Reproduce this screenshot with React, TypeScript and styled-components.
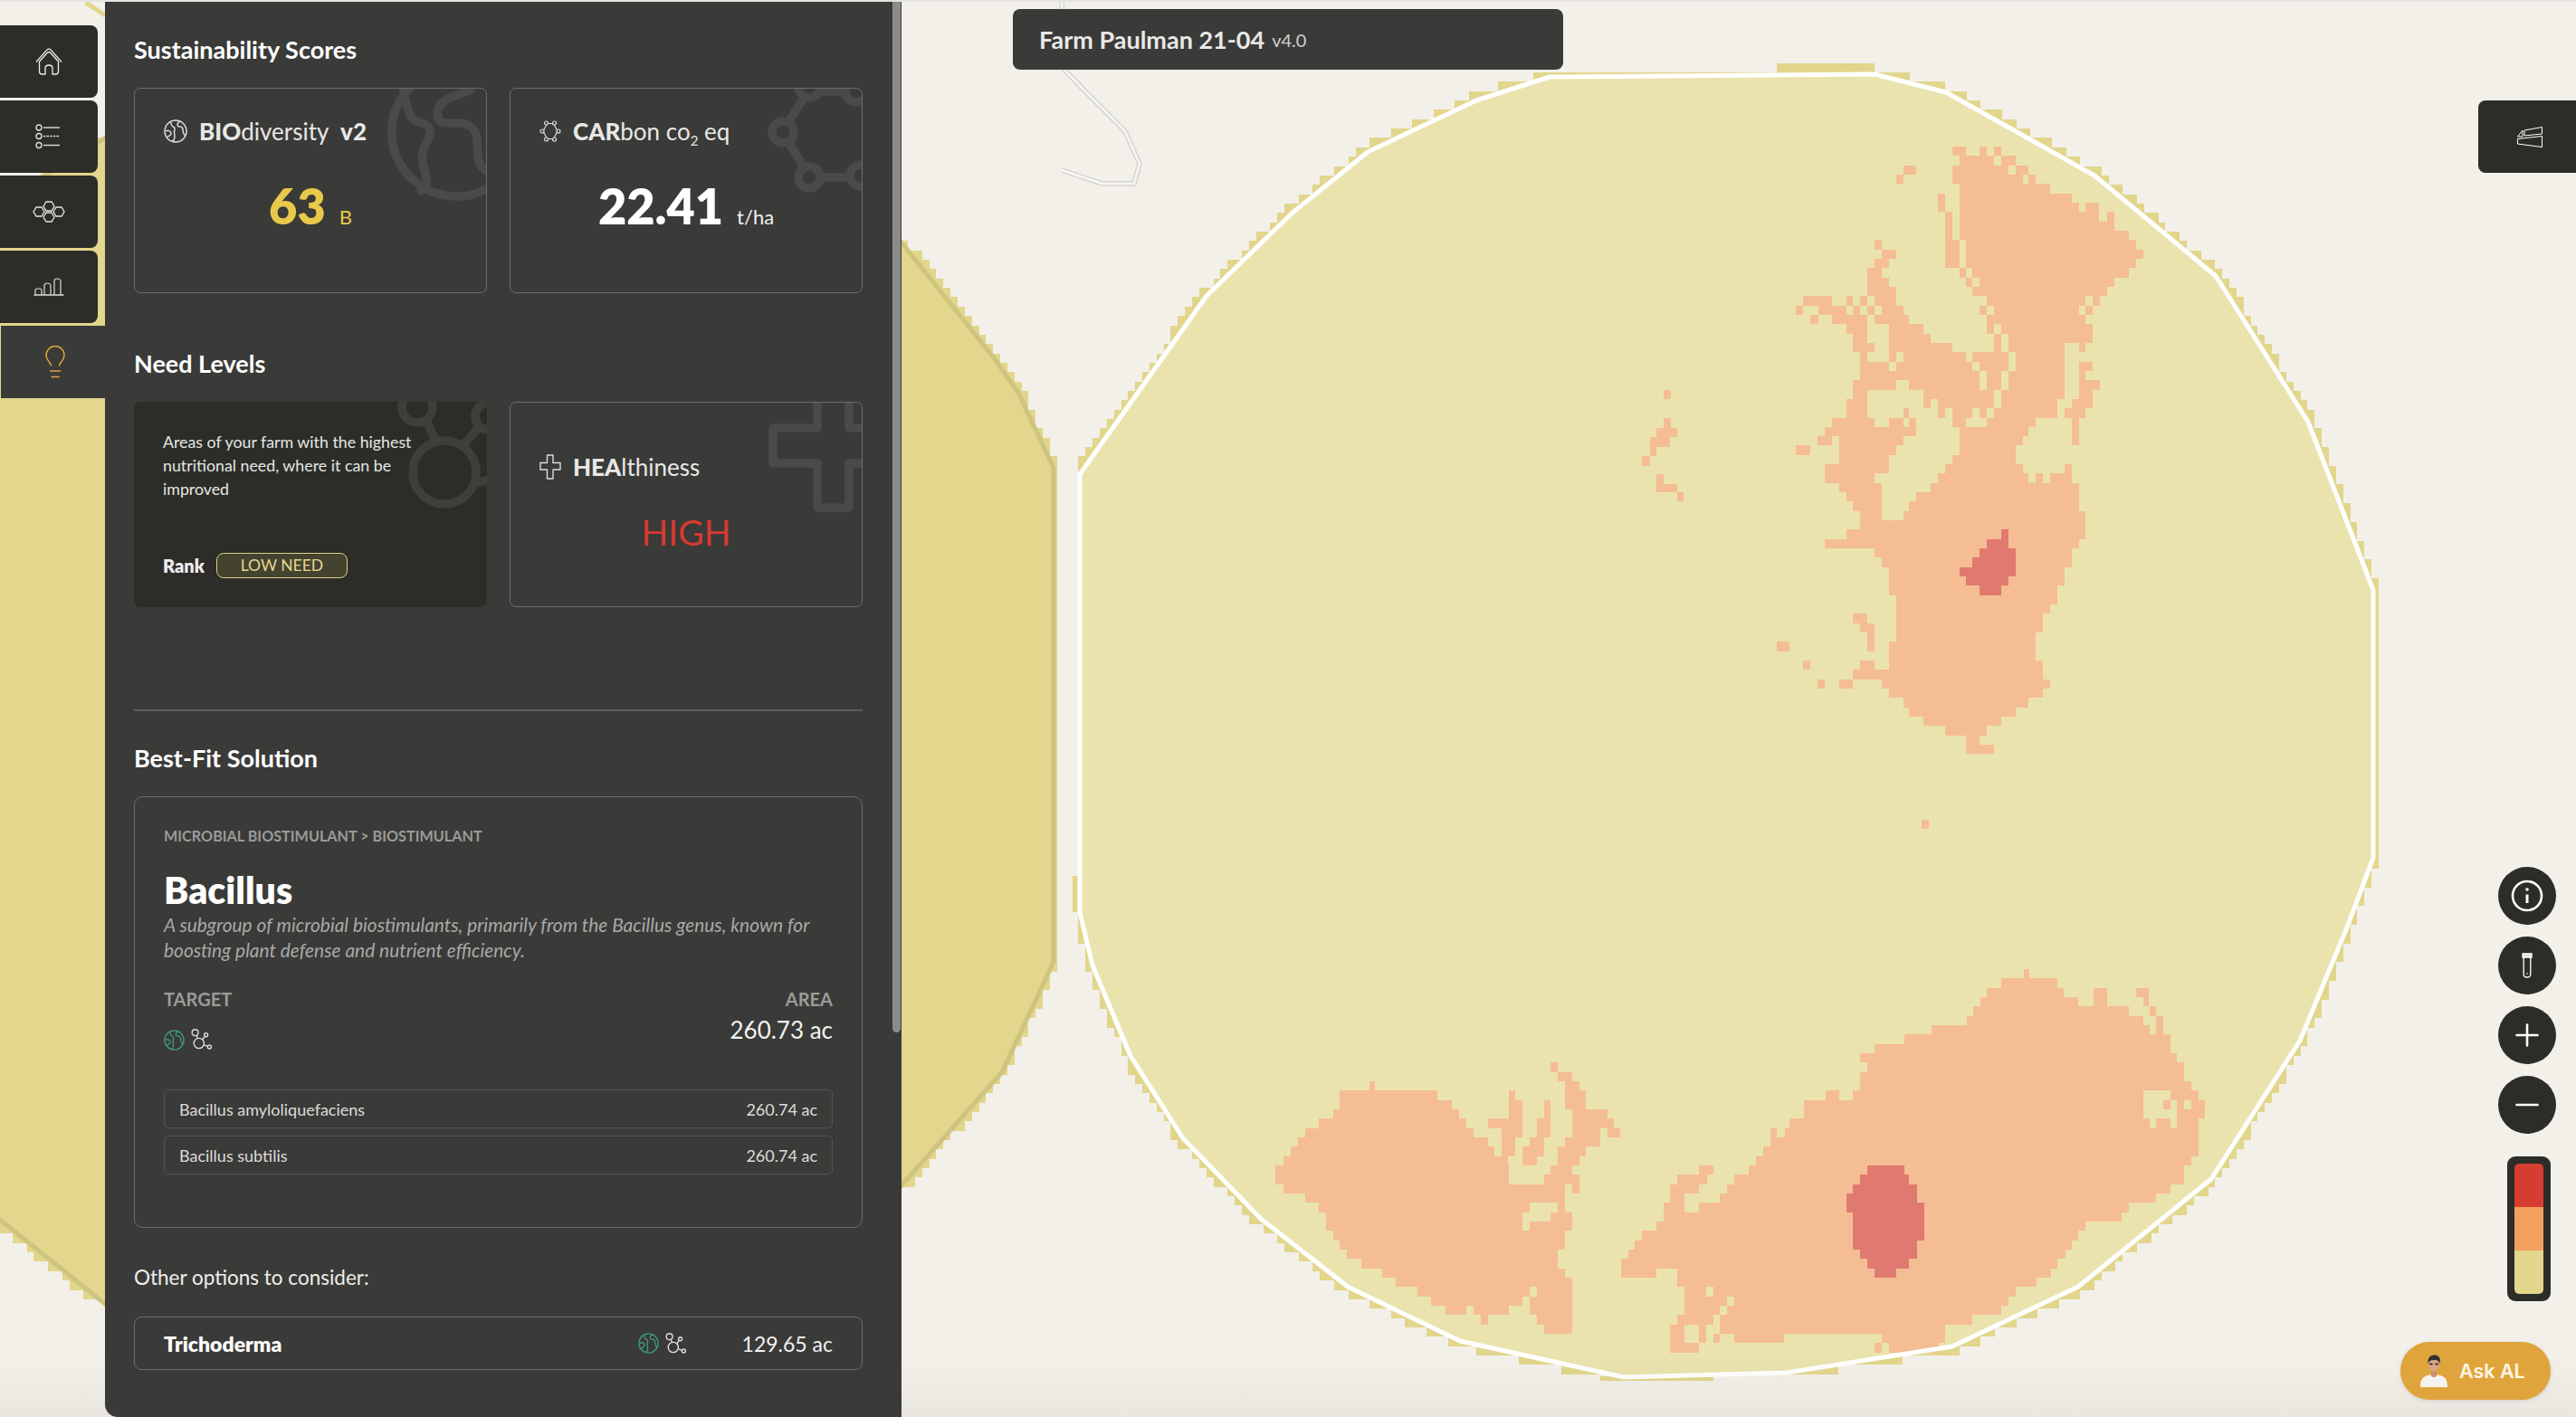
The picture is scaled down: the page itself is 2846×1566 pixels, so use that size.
import React from "react";
import styled, { createGlobalStyle } from "styled-components";

const GlobalStyle = createGlobalStyle`
  html, body {
    margin: 0;
    padding: 0;
    background: #f2f0e9;
  }
  body {
    font-family: "Lato", "Open Sans", sans-serif;
    color: #fff;
  }
  * {
    box-sizing: border-box;
  }
`;

// ---- map data, traced from the field raster ----

const FARM: number[][] = [
  [1193, 524], [1333, 327], [1428, 235], [1511, 168], [1631, 111], [1712, 85],
  [2071, 82], [2150, 102], [2314, 194], [2448, 305], [2550, 466], [2622, 652],
  [2622, 948], [2593, 1025], [2541, 1150], [2443, 1303], [2296, 1422], [2157, 1488],
  [1974, 1517], [1794, 1522], [1613, 1482], [1489, 1422], [1393, 1347], [1307, 1258],
  [1249, 1167], [1207, 1067], [1193, 1008],
];

const NEIGHBOUR: number[][] = [
  [-10, 232], [120, 150], [900, 150], [996, 268], [1100, 398], [1125, 434], [1164, 517],
  [1164, 1063], [1107, 1185], [996, 1310], [900, 1441], [116, 1441], [-10, 1340],
];

// x pairs per row, in units of the upper patch tile
const UPPER_PATCH: number[][] = [
  [770, 816, 862, 885, 908, 933],
  [795, 908, 933, 981],
  [610, 652, 770, 957, 981, 1023],
  [585, 610, 770, 1005, 1023, 1047],
  [795, 1095],
  [723, 747, 795, 1168],
  [723, 747, 795, 1190, 1212, 1258],
  [747, 772, 795, 1258, 1283, 1307],
  [747, 772, 795, 1307],
  [747, 772, 795, 1355],
  [513, 537, 747, 795, 816, 1380],
  [537, 585, 747, 795, 816, 1403],
  [513, 560, 747, 795, 816, 1380],
  [490, 537, 795, 816, 838, 1355],
  [490, 560, 816, 838, 862, 1307],
  [490, 585, 838, 1283],
  [277, 373, 421, 441, 465, 490, 513, 585, 885, 1212, 1236, 1260],
  [253, 277, 327, 421, 441, 465, 490, 513, 537, 610, 862, 885, 908, 1190, 1212, 1236],
  [301, 327, 373, 490, 513, 628, 885, 1212],
  [421, 490, 560, 675, 885, 908, 933, 1236],
  [441, 490, 560, 700, 908, 933, 957, 1236],
  [441, 513, 560, 772, 908, 933, 957, 1143, 1190, 1212],
  [465, 490, 560, 585, 610, 816, 838, 957, 981, 1143],
  [465, 560, 585, 838, 862, 957, 981, 1143, 1190, 1236],
  [465, 862, 885, 933, 957, 1143, 1190, 1212],
  [441, 585, 628, 862, 885, 933, 957, 1143, 1190, 1260],
  [441, 490, 675, 908, 933, 1143, 1190, 1236],
  [421, 490, 675, 700, 723, 908, 933, 1120, 1168, 1236],
  [421, 490, 610, 628, 723, 747, 772, 838, 862, 885, 908, 1120, 1143, 1212],
  [373, 513, 560, 610, 628, 652, 772, 816, 885, 1047, 1168, 1190],
  [349, 652, 795, 1023, 1168, 1190],
  [325, 373, 397, 610, 795, 1005, 1168, 1190],
  [253, 301, 397, 585, 795, 981],
  [397, 560, 772, 981],
  [349, 560, 747, 1005, 1143, 1168],
  [349, 513, 723, 1023, 1047, 1072, 1095, 1168],
  [397, 537, 700, 1190],
  [421, 537, 652, 1190],
  [441, 537, 628, 1190],
  [465, 537, 610, 1212],
  [465, 1212],
  [421, 1212],
  [349, 1190],
  [513, 1168],
  [537, 1168],
  [560, 1143],
  [560, 1143],
  [560, 1120],
  [585, 1120],
  [585, 1095],
  [441, 490, 585, 1072],
  [465, 513, 585, 1072],
  [490, 513, 585, 1047],
  [190, 230, 490, 513, 560, 1047],
  [560, 1047],
  [277, 301, 465, 513, 560, 1072],
  [441, 1072],
  [325, 349, 397, 441, 537, 1095],
  [560, 1072],
  [610, 1023],
  [628, 981],
  [675, 933],
  [747, 885],
  [816, 862],
  [816, 908],
];

const UPPER_CORE: number[][] = [
  [933, 957], [885, 957], [860, 981], [838, 981], [795, 981], [816, 957], [860, 933],
];

const LOWER_PATCH: number[][] = [
  [1207, 1216],
  [1174, 1258],
  [1152, 1268, 1312, 1333, 1377, 1396],
  [1142, 1290, 1312, 1333, 1387, 1396],
  [1131, 1365, 1397, 1407],
  [1121, 1387, 1407, 1417],
  [1069, 1397, 1407, 1417],
  [1027, 1428],
  [983, 1428],
  [961, 1438],
  [495, 505, 972, 1449],
  [505, 527, 961, 1449],
  [222, 230, 516, 538, 961, 1460],
  [177, 325, 432, 442, 516, 548, 909, 930, 950, 1387, 1428, 1470],
  [177, 346, 432, 453, 485, 495, 516, 548, 877, 1387, 1417, 1428, 1438, 1449, 1460, 1480],
  [167, 357, 432, 453, 485, 495, 527, 580, 877, 1387, 1438, 1480],
  [146, 368, 401, 453, 474, 495, 527, 590, 855, 1397, 1407, 1428, 1438, 1470],
  [125, 379, 421, 453, 474, 495, 527, 570, 580, 600, 826, 836, 848, 1470],
  [115, 400, 421, 442, 464, 485, 516, 570, 826, 1470],
  [104, 410, 421, 442, 453, 485, 506, 548, 815, 1470],
  [92, 430, 453, 474, 506, 538, 804, 1460],
  [81, 432, 495, 527, 718, 740, 793, 1449],
  [81, 432, 485, 538, 686, 730, 771, 1449],
  [92, 516, 527, 538, 675, 718, 761, 1428],
  [125, 516, 675, 696, 750, 1407],
  [146, 464, 506, 516, 665, 696, 718, 1365],
  [156, 453, 495, 527, 665, 1355],
  [156, 453, 464, 527, 654, 1300],
  [167, 516, 633, 1290],
  [177, 516, 622, 1280],
  [188, 506, 612, 1270],
  [210, 506, 601, 1258],
  [241, 516, 601, 654, 686, 1248],
  [262, 527, 686, 1226],
  [294, 464, 474, 527, 697, 729, 740, 1195],
  [315, 453, 464, 527, 697, 761, 771, 1185],
  [336, 368, 379, 432, 464, 527, 697, 750, 761, 1174],
  [390, 400, 474, 527, 686, 740, 750, 1130],
  [485, 527, 675, 696, 718, 729, 750, 1089],
  [675, 696, 718, 729, 740, 750, 771, 847, 994, 1089],
  [675, 718, 983, 994, 1005, 1079],
];

const LOWER_CORE: [number, number[]][] = [
  [21, [972, 1027]], [22, [961, 1035]], [23, [950, 1047]], [24, [940, 1047]], [25, [940, 1058]],
  [26, [950, 1058]], [27, [950, 1058]], [28, [950, 1058]], [29, [950, 1047]], [30, [961, 1047]],
  [31, [972, 1035]], [32, [983, 1016]],
];

const STRAY_CELLS = [
  [1838, 431, 8, 10], [1838, 462, 8, 11], [1830, 473, 23, 10], [1823, 483, 22, 11], [1823, 494, 7, 10],
  [1814, 504, 9, 11], [1830, 524, 8, 11], [1830, 535, 23, 9], [1853, 544, 7, 10], [2123, 906, 8, 10],
];

const upperRow = (spans: number[], i: number) => {
  const y1 = 100 + (128 + i * 21.3) / 2.063;
  const y2 = y1 + 21.3 / 2.063;
  return toRects(spans, (v) => 1900 + v / 3, y1, y2);
};

const lowerRow = (spans: number[], i: number) => {
  const y1 = 1060 + (33 + i * 31) / 3;
  const y2 = y1 + 31 / 3;
  return toRects(spans, (v) => 1350 + v / 1.363, y1, y2);
};

function toRects(spans: number[], mapX: (v: number) => number, y1: number, y2: number) {
  let d = "";
  for (let k = 0; k < spans.length; k += 2) {
    const a = mapX(spans[k]).toFixed(1);
    const b = mapX(spans[k + 1]).toFixed(1);
    d += `M${a} ${y1.toFixed(1)}H${b}V${y2.toFixed(1)}H${a}Z`;
  }
  return d;
}

function scan(poly: number[][], y: number) {
  const xs: number[] = [];
  poly.forEach(([x1, y1], i) => {
    const [x2, y2] = poly[(i + 1) % poly.length];
    if ((y1 <= y && y2 > y) || (y2 <= y && y1 > y)) {
      xs.push(x1 + ((y - y1) / (y2 - y1)) * (x2 - x1));
    }
  });
  return xs.length ? [Math.min(...xs), Math.max(...xs)] : null;
}

// the coarse raster pokes out past the smooth boundary in stair steps
const CELL_W = 7.85;
const CELL_H = 10.35;
const GRID_X = 6;

function stairs(poly: number[][], padLeft: number, padRight: number) {
  let d = "";
  for (let y = 80; y < 1530; y += CELL_H) {
    const hit = scan(poly, y + CELL_H / 2);
    if (!hit) continue;
    const top = scan(poly, y) || hit;
    const bottom = scan(poly, y + CELL_H) || hit;
    const lo = Math.min(hit[0], top[0], bottom[0]);
    const hi = Math.max(hit[1], top[1], bottom[1]);
    const a = Math.floor((lo - padLeft - GRID_X) / CELL_W) * CELL_W + GRID_X;
    const b = Math.ceil((hi + padRight - GRID_X) / CELL_W) * CELL_W + GRID_X;
    d += `M${a.toFixed(1)} ${y.toFixed(1)}H${b.toFixed(1)}V${(y + CELL_H).toFixed(1)}H${a.toFixed(1)}Z`;
  }
  return d;
}

const points = (poly: number[][]) => poly.map((p) => p.join(",")).join(" ");

const upperPatchPath = UPPER_PATCH.map(upperRow).join("");
const upperCorePath = UPPER_CORE.map((s, i) => upperRow(s, i + 41)).join("");
const lowerPatchPath = LOWER_PATCH.map(lowerRow).join("");
const lowerCorePath = LOWER_CORE.map(([i, s]) => lowerRow(s, i)).join("");
const strayPath = STRAY_CELLS.map(([x, y, w, h]) => `M${x} ${y}h${w}v${h}h${-w}Z`).join("");

const ROAD = "M1173 0 L1176 77 L1199 101 L1243 145 L1259 181 L1253 203 L1218 203 L1173 188";

const FieldMap: React.FC = () => (
  <MapSvg viewBox="0 0 2846 1566" width={2846} height={1566}>
    <path d={ROAD} fill="none" stroke="#cfcfcc" strokeWidth={5.5} />
    <path d={ROAD} fill="none" stroke="#f6f5f2" strokeWidth={3} />
    <path d="M95 3 L116 17" stroke="#e2d68c" strokeWidth={5} />

    <path d={stairs(NEIGHBOUR, 2, 0)} fill="#e2d68c" shapeRendering="crispEdges" />
    <polygon points={points(NEIGHBOUR)} fill="#e3d68d" stroke="#cfc47e" strokeWidth={5} />

    <path d={stairs(FARM, 1.5, 2)} fill="#e2d68c" shapeRendering="crispEdges" />
    <path d="M1963 70H2071V82H1963ZM1768 1521H1893V1526H1768ZM1185 968H1191V1008H1185Z" fill="#e2d68c" shapeRendering="crispEdges" />
    <polygon points={points(FARM)} fill="#ebe3ae" />

    <path d={upperPatchPath + lowerPatchPath + strayPath} fill="#f5bd94" shapeRendering="crispEdges" />
    <path d={upperCorePath + lowerCorePath} fill="#e07a70" shapeRendering="crispEdges" />

    <polygon points={points(FARM)} fill="none" stroke="#fff" strokeWidth={5} strokeLinejoin="round" />
  </MapSvg>
);

// ---- icons ----

const HomeIcon = () => (
  <svg width={30} height={30} viewBox="0 0 30 30" fill="none" stroke="#eee" strokeWidth={1.3} strokeLinejoin="round">
    <path d="M1 15.5 L12.6 2.4 Q15 0 17.4 2.4 L29 15.5" />
    <path d="M4.5 15 L13 5.5 Q15 3.6 17 5.5 L25.5 15" />
    <path d="M4.5 15 V26 Q4.5 29 7.5 29 H11 V22.5 Q11 19 15 19 Q19 19 19 22.5 V29 H22.5 Q25.5 29 25.5 26 V15" />
  </svg>
);

const ListIcon = () => (
  <svg width={30} height={28} viewBox="0 0 30 28" fill="none" stroke="#ddd" strokeWidth={1.4}>
    <circle cx={4} cy={4} r={3} />
    <circle cx={4} cy={13.5} r={3} />
    <circle cx={4} cy={23.5} r={3} />
    <path d="M9 4 H27" />
    <path d="M9 13.5 H27" strokeDasharray="2.4 1.2" />
    <path d="M9 23.5 H27" />
  </svg>
);

const hex = (cx: number, cy: number) =>
  [[-6, 0], [-3, -5], [3, -5], [6, 0], [3, 5], [-3, 5]].map(([x, y]) => `${cx + x},${cy + y}`).join(" ");

const HexIcon = () => (
  <svg width={36} height={26} viewBox="0 0 36 26" fill="none" stroke="#e4e4e2" strokeWidth={1.3}>
    <polygon points={hex(7, 13)} />
    <polygon points={hex(18, 7)} />
    <polygon points={hex(18, 19)} />
    <polygon points={hex(29, 13)} />
  </svg>
);

const BarsIcon = () => (
  <svg width={34} height={20} viewBox="0 0 34 20" fill="none" stroke="#ddd" strokeWidth={1.2}>
    <path d="M0.5 19 H33.5" strokeWidth={1.6} />
    <path d="M2 19 V14 Q2 12 4 12 H7 Q9 12 9 14 V19" />
    <path d="M12 19 V9 Q12 6 15 6 Q19 6 19 9 V19" />
    <path d="M23 19 V4 Q23 1 26 1 Q30 1 30 4 V19" />
  </svg>
);

const BulbIcon = () => (
  <svg width={24} height={36} viewBox="0 0 24 36" fill="none" stroke="#dfa53c" strokeWidth={1.5} strokeLinecap="round">
    <path d="M7.5 22 C7 18.5 2 16.5 2 10.5 A10 10 0 0 1 22 10.5 C22 16.5 17 18.5 16.5 22" />
    <path d="M6.5 28 H17.5" />
    <path d="M8 34.5 H16" />
  </svg>
);

const GlobeIcon: React.FC<{ color?: string; size?: number }> = ({ color = "#ddd", size = 26 }) => (
  <svg width={size} height={size} viewBox="0 0 26 26" fill="none" stroke={color} strokeWidth={1.5} strokeLinejoin="round">
    <circle cx={13} cy={13} r={12} />
    <path d="M7.5 2.5 C8 6 9.5 8 11 8.5 C13 9 11.5 12 11.5 14 C11.5 17 13 20 11 23 L9 24" />
    <path d="M18.5 2 C15 3 14.5 5.5 15.5 7.5 C18 8 21 7.5 21 11 C21 14 21.5 17 24.5 18" />
    <path d="M2 13 C5 11 8 13 8 16 C8 18 5 18 4 19.5" />
  </svg>
);

const MoleculeRing = () => (
  <svg width={24} height={24} viewBox="0 0 24 24" fill="none" stroke="#ddd" strokeWidth={1.2}>
    <path d="M8.5 3.5 H15.5 L20 12 L15.5 20.5 H8.5 L4 12 Z" />
    {[[7.5, 3], [16.5, 3], [21, 12], [16.5, 21], [7.5, 21], [3, 12]].map(([cx, cy]) => (
      <circle key={`${cx}-${cy}`} cx={cx} cy={cy} r={2} fill="#3a3a38" />
    ))}
  </svg>
);

const CrossIcon = () => (
  <svg width={24} height={28} viewBox="0 0 24 28" fill="none" stroke="#ddd" strokeWidth={1.4} strokeLinejoin="round">
    <path d="M8.5 1 H15 V9.5 H23 V17 H15 V27 H8.5 V17 H1 V9.5 H8.5 Z" />
  </svg>
);

const NutrientIcon = () => (
  <svg width={24} height={24} viewBox="0 0 24 24" fill="none" stroke="#ddd" strokeWidth={1.4}>
    <circle cx={4.6} cy={4.2} r={3.4} />
    <circle cx={16.6} cy={6.8} r={2} />
    <circle cx={8.8} cy={16} r={5.6} />
    <circle cx={20.4} cy={20} r={2} />
    <path d="M6 7.5 L7.6 10.5 M15.4 8.4 L12.6 12 M14.2 17.6 L18.4 19.4" />
  </svg>
);

const SliceIcon = () => (
  <svg width={28} height={23} viewBox="0 0 28 23" fill="none" stroke="#fff" strokeWidth={1} strokeLinejoin="round">
    <path d="M0.5 13.5 L27.5 10.5 V22.5 L0.5 19 Z" />
    <path d="M8 4 L27.5 0.5 V8 L8 10 Z" />
    <path d="M0.5 11 L6 4 V11 Z" />
  </svg>
);

const InfoIcon = () => (
  <svg width={36} height={36} viewBox="0 0 36 36" fill="none" stroke="#fff" strokeWidth={2.6}>
    <circle cx={18} cy={18} r={16} />
    <path d="M18 16.5 V26" strokeWidth={3} />
    <circle cx={18} cy={11} r={1.8} fill="#fff" stroke="none" />
  </svg>
);

const TubeIcon = () => (
  <svg width={12} height={28} viewBox="0 0 12 28" fill="none" stroke="#fff" strokeWidth={1.3}>
    <path d="M1 1 H11 V5 H1 Z" fill="#ddd" />
    <path d="M2.2 5 V24 Q2.2 27 6 27 Q9.8 27 9.8 24 V5" />
    <circle cx={6} cy={23} r={0.8} fill="#fff" stroke="none" />
  </svg>
);

const PlusIcon = () => (
  <svg width={26} height={26} viewBox="0 0 26 26" stroke="#fff" strokeWidth={2.6} strokeLinecap="round">
    <path d="M1.5 13 H24.5 M13 1.5 V24.5" />
  </svg>
);

const MinusIcon = () => (
  <svg width={26} height={26} viewBox="0 0 26 26" stroke="#fff" strokeWidth={2.6} strokeLinecap="round">
    <path d="M1.5 13 H24.5" />
  </svg>
);

const AlAvatar = () => (
  <svg width={30} height={36} viewBox="0 0 30 36">
    <path d="M0 36 C0 27 3 24 10 22.5 L20 22.5 C27 24 30 27 30 36 Z" fill="#f4f3f0" />
    <path d="M12 17 H18 V24 Q15 26 12 24 Z" fill="#c99474" />
    <ellipse cx={15} cy={11} rx={6} ry={7.6} fill="#d8a585" />
    <path d="M8.6 10 C7.5 3 12 0 16.5 0.5 C21 1 23 5 21.4 10 C20.5 6.5 18 6 15 6 C11.5 6 9.5 7 8.6 10 Z" fill="#34322f" />
    <path d="M10 10.6 H13.6 M16.4 10.6 H20" stroke="#2a2522" strokeWidth={1.5} />
  </svg>
);

const GlobeWatermark = () => (
  <Watermark viewBox="0 0 130 130" width={130} height={130} $color="#4a4a48">
    <circle cx={97} cy={48} r={71} />
    <path d="M38 -2 C42 15 44 32 52 36 C66 38 72 44 66 56 C58 70 58 78 62 90 C65 100 66 108 58 113" />
    <path d="M112 2 C96 8 76 12 76 28 C77 38 82 38 94 38 C110 37 118 42 120 55 C121 68 118 85 132 92" />
  </Watermark>
);

const CarbonWatermark = () => (
  <Watermark viewBox="0 0 130 130" width={130} height={130} $color="#4a4a48">
    <circle cx={43} cy={48} r={12} />
    <circle cx={72} cy={98} r={12} />
    <circle cx={129} cy={96} r={12} />
    <circle cx={72} cy={-2} r={12} />
    <circle cx={124} cy={3} r={12} />
    <path d="M49 37 L67 9 M49 59 L66 87 M84 98 H117 M84 3 H112" />
  </Watermark>
);

const NeedWatermark = () => (
  <Watermark viewBox="0 0 130 130" width={130} height={130} $color="#3e3f3b">
    <circle cx={83} cy={78} r={35} />
    <circle cx={53} cy={6} r={17} />
    <circle cx={132} cy={16} r={15} />
    <path d="M63 21 L74 44 M104 48 L122 27 M116 90 L134 86" />
  </Watermark>
);

const CrossWatermark = () => (
  <Watermark viewBox="0 0 130 130" width={130} height={130} $color="#4a4a48">
    <path d="M81 -8 V28 H32 V67 H81 V116 H116 V67 H140 M116 -8 V28 H140" strokeLinejoin="round" />
  </Watermark>
);

// ---- page ----

const navIcons = [<HomeIcon key="home" />, <ListIcon key="list" />, <HexIcon key="hex" />, <BarsIcon key="bars" />];

const App: React.FC = () => {
  return (
    <Page>
      <GlobalStyle />
      <FieldMap />
      <BottomShade />
      <Shell>
        <Nav>
          {navIcons.map((icon, i) => (
            <NavButton key={i}>{icon}</NavButton>
          ))}
          <NavActive>
            <BulbIcon />
          </NavActive>
        </Nav>

        <Panel>
          <Scrollbar />
          <SectionTitle>Sustainability Scores</SectionTitle>
          <CardGrid>
            <OutlineCard>
              <GlobeWatermark />
              <CardTitle>
                <GlobeIcon />
                <span>
                  <b>BIO</b>diversity&nbsp; <b>v2</b>
                </span>
              </CardTitle>
              <Score>
                <ScoreValue $color="#e8c94a">63</ScoreValue>
                <ScoreUnit $color="#e8c94a">B</ScoreUnit>
              </Score>
            </OutlineCard>
            <OutlineCard>
              <CarbonWatermark />
              <CardTitle>
                <MoleculeRing />
                <span>
                  <b>CAR</b>bon co<sub>2</sub> eq
                </span>
              </CardTitle>
              <Score>
                <ScoreValue>22.41</ScoreValue>
                <ScoreUnit>t/ha</ScoreUnit>
              </Score>
            </OutlineCard>
          </CardGrid>

          <NeedTitle>Need Levels</NeedTitle>
          <CardGrid>
            <NeedCard>
              <NeedWatermark />
              <NeedText>
                Areas of your farm with the highest
                <br />
                nutritional need, where it can be
                <br />
                improved
              </NeedText>
              <RankRow>
                <RankLabel>Rank</RankLabel>
                <RankPill>LOW NEED</RankPill>
              </RankRow>
            </NeedCard>
            <HealthCard>
              <CrossWatermark />
              <CardTitle>
                <CrossIcon />
                <span>
                  <b>HEA</b>lthiness
                </span>
              </CardTitle>
              <HealthValue>HIGH</HealthValue>
            </HealthCard>
          </CardGrid>

          <Divider />
          <BestFitTitle>Best-Fit Solution</BestFitTitle>
          <SolutionCard>
            <Breadcrumb>MICROBIAL BIOSTIMULANT &gt; BIOSTIMULANT</Breadcrumb>
            <SolutionName>Bacillus</SolutionName>
            <SolutionText>
              A subgroup of microbial biostimulants, primarily from the Bacillus genus, known for
              <br />
              boosting plant defense and nutrient efficiency.
            </SolutionText>
            <MetaRow>
              <div>
                <MetaLabel>TARGET</MetaLabel>
                <TargetIcons>
                  <GlobeIcon color="#3f9b7d" size={23} />
                  <NutrientIcon />
                </TargetIcons>
              </div>
              <AreaCol>
                <MetaLabel>AREA</MetaLabel>
                <AreaValue>260.73 ac</AreaValue>
              </AreaCol>
            </MetaRow>
            <StrainList>
              <StrainRow>
                <span>Bacillus amyloliquefaciens</span>
                <span>260.74 ac</span>
              </StrainRow>
              <StrainRow>
                <span>Bacillus subtilis</span>
                <span>260.74 ac</span>
              </StrainRow>
            </StrainList>
          </SolutionCard>

          <OtherTitle>Other options to consider:</OtherTitle>
          <OptionRow>
            <OptionName>Trichoderma</OptionName>
            <OptionIcons>
              <GlobeIcon color="#3f9b7d" size={23} />
              <NutrientIcon />
            </OptionIcons>
            <OptionArea>129.65 ac</OptionArea>
          </OptionRow>
        </Panel>
      </Shell>

      <FarmBar>
        Farm Paulman 21-04 <FarmVersion>v4.0</FarmVersion>
      </FarmBar>

      <LayerTab>
        <SliceIcon />
      </LayerTab>

      <MapControls>
        <RoundButton>
          <InfoIcon />
        </RoundButton>
        <RoundButton>
          <TubeIcon />
        </RoundButton>
        <RoundButton>
          <PlusIcon />
        </RoundButton>
        <RoundButton>
          <MinusIcon />
        </RoundButton>
        <Legend>
          <LegendInner>
            <LegendStep $color="#d63c30" />
            <LegendStep $color="#f2a05e" />
            <LegendStep $color="#e2d68c" />
          </LegendInner>
        </Legend>
      </MapControls>

      <AskButton>
        <AlAvatar />
        Ask AL
      </AskButton>
    </Page>
  );
};

const Page = styled.div`
  position: relative;
  width: 2846px;
  height: 1566px;
  overflow: hidden;
  background: #f2f0e9;
  border-top: 2px solid #e3e4e0;
`;

const MapSvg = styled.svg`
  position: absolute;
  left: 0;
  top: -2px;
`;

const BottomShade = styled.div`
  position: absolute;
  left: 0;
  right: 0;
  bottom: 0;
  height: 70px;
  background: linear-gradient(to bottom, rgba(0, 0, 0, 0), rgba(60, 50, 30, 0.05));
`;

const Shell = styled.div`
  position: relative;
  display: flex;
  align-items: stretch;
  height: 1564px;
`;

const Nav = styled.nav`
  width: 116px;
  padding-top: 26px;
  display: flex;
  flex-direction: column;
  gap: 3px;
`;

const NavButton = styled.button`
  width: 108px;
  height: 80px;
  border: 0;
  padding: 0 0 0 0;
  background: #2c2d28;
  border-radius: 0 8px 8px 0;
  display: flex;
  align-items: center;
  justify-content: center;
`;

const NavActive = styled(NavButton)`
  width: 115px;
  margin-left: 1px;
  padding-left: 4px;
  background: #3a3a38;
  border-radius: 0;
`;

const Panel = styled.aside`
  position: relative;
  width: 880px;
  padding: 37px 43px 0 32px;
  background: #3a3a38;
  border-radius: 0 0 0 14px;
`;

const Scrollbar = styled.div`
  position: absolute;
  right: 1px;
  top: 0;
  width: 9px;
  height: 1139px;
  background: #8c8c8a;
  border-radius: 0 0 5px 5px;
`;

const SectionTitle = styled.h2`
  margin: 0 0 26px;
  font-size: 27px;
  line-height: 32px;
  font-weight: 700;
  color: #fff;
`;

const NeedTitle = styled(SectionTitle)`
  margin-top: 62px;
`;

const BestFitTitle = styled(SectionTitle)`
  margin-top: 36px;
`;

const CardGrid = styled.div`
  display: grid;
  grid-template-columns: 390px 390px;
  gap: 25px;
`;

const BaseCard = styled.div`
  position: relative;
  height: 227px;
  overflow: hidden;
  border-radius: 7px;
`;

const OutlineCard = styled(BaseCard)`
  border: 1.5px solid #6c6c6a;
  padding: 31px 32px 0 32px;
`;

const NeedCard = styled(BaseCard)`
  display: flex;
  flex-direction: column;
  background: #2c2d28;
  padding: 31px 20px 32px 32px;
`;

const HealthCard = styled(OutlineCard)`
  padding-top: 55px;
`;

const Watermark = styled.svg<{ $color: string }>`
  position: absolute;
  right: 0;
  top: 0;
  fill: none;
  stroke: ${(p) => p.$color};
  stroke-width: 9.5;
  stroke-linecap: round;
`;

const CardTitle = styled.div`
  position: relative;
  display: flex;
  align-items: center;
  gap: 13px;
  height: 32px;
  font-size: 26px;
  white-space: nowrap;
  color: #e8e8e6;

  b {
    font-weight: 900;
  }
  sub {
    font-size: 15px;
    line-height: 0;
    vertical-align: -6px;
  }
`;

const Score = styled.div`
  position: relative;
  margin-top: 37px;
  height: 60px;
  display: flex;
  align-items: baseline;
  justify-content: center;
  gap: 15px;
`;

const ScoreValue = styled.span<{ $color?: string }>`
  font-size: 54px;
  line-height: 60px;
  font-weight: 800;
  color: ${(p) => p.$color || "#fff"};
`;

const ScoreUnit = styled.span<{ $color?: string }>`
  font-size: 22px;
  color: ${(p) => p.$color || "#f2f2f2"};
`;

const NeedText = styled.div`
  position: relative;
  font-size: 17.8px;
  line-height: 26px;
  color: #e6e6e4;
`;

const RankRow = styled.div`
  position: relative;
  margin-top: auto;
  display: flex;
  align-items: center;
  gap: 13px;
`;

const RankLabel = styled.span`
  font-size: 20px;
  font-weight: 800;
  color: #eee;
`;

const RankPill = styled.span`
  width: 145px;
  height: 28px;
  border: 1.5px solid #d9d08a;
  border-radius: 8px;
  background: #44432f;
  color: #e3d68f;
  font-size: 17.5px;
  line-height: 25px;
  text-align: center;
`;

const HealthValue = styled.div`
  position: relative;
  margin-top: 31px;
  text-align: center;
  font-size: 39px;
  line-height: 50px;
  color: #d63a30;
`;

const Divider = styled.hr`
  margin: 113px 0 0;
  border: 0;
  height: 2px;
  background: #5f5f5d;
`;

const SolutionCard = styled.div`
  height: 477px;
  border: 1.5px solid #6c6c6a;
  border-radius: 10px;
  padding: 33px 32px 0;
`;

const Breadcrumb = styled.div`
  font-size: 16.2px;
  line-height: 20px;
  font-weight: 700;
  color: #9b9b99;
`;

const SolutionName = styled.div`
  margin-top: 28px;
  font-size: 41px;
  line-height: 44px;
  font-weight: 800;
  color: #fff;
`;

const SolutionText = styled.div`
  margin-top: 2px;
  font-size: 20.9px;
  line-height: 28px;
  font-style: italic;
  white-space: nowrap;
  color: #a9a9a7;
`;

const MetaRow = styled.div`
  margin-top: 28px;
  display: flex;
  justify-content: space-between;
`;

const MetaLabel = styled.div`
  font-size: 20px;
  line-height: 24px;
  font-weight: 700;
  color: #9b9b99;
`;

const TargetIcons = styled.div`
  margin-top: 21px;
  display: flex;
  align-items: center;
  gap: 7px;
`;

const AreaCol = styled.div`
  text-align: right;
`;

const AreaValue = styled.div`
  margin-top: 7px;
  font-size: 26px;
  line-height: 30px;
  color: #f2f2f2;
`;

const StrainList = styled.div`
  margin-top: 43px;
  display: flex;
  flex-direction: column;
  gap: 8px;
`;

const StrainRow = styled.div`
  height: 43px;
  padding: 0 16px;
  border: 1px solid #545452;
  border-radius: 5px;
  display: flex;
  align-items: center;
  justify-content: space-between;
  font-size: 18px;
  color: #dcdcda;
`;

const OtherTitle = styled.div`
  margin: 40px 0 28px;
  font-size: 22.5px;
  line-height: 30px;
  color: #eeeeec;
`;

const OptionRow = styled.div`
  height: 59px;
  padding: 0 32px;
  border: 1.5px solid #6c6c6a;
  border-radius: 8px;
  display: flex;
  align-items: center;
`;

const OptionName = styled.div`
  flex: 1;
  font-size: 23px;
  font-weight: 800;
  color: #fff;
`;

const OptionIcons = styled(TargetIcons)`
  margin-top: 0;
`;

const OptionArea = styled.div`
  width: 161px;
  text-align: right;
  font-size: 23px;
  color: #f2f2f2;
`;

const FarmBar = styled.div`
  position: absolute;
  left: 1119px;
  top: 8px;
  width: 608px;
  height: 67px;
  padding-left: 29px;
  display: flex;
  align-items: center;
  gap: 8px;
  background: #3a3a38;
  border-radius: 8px;
  font-size: 27px;
  font-weight: 700;
  color: #e8e8e6;
`;

const FarmVersion = styled.span`
  font-size: 20px;
  font-weight: 400;
  color: #cfcfcd;
`;

const LayerTab = styled.div`
  position: absolute;
  right: 0;
  top: 109px;
  width: 108px;
  height: 80px;
  padding-left: 43px;
  display: flex;
  align-items: center;
  background: #2c2d28;
  border-radius: 8px 0 0 8px;
`;

const MapControls = styled.div`
  position: absolute;
  right: 22px;
  top: 956px;
  display: flex;
  flex-direction: column;
  align-items: center;
  gap: 13px;
`;

const RoundButton = styled.button`
  width: 64px;
  height: 64px;
  padding: 0;
  border: 0;
  border-radius: 50%;
  background: #2c2d28;
  display: flex;
  align-items: center;
  justify-content: center;
`;

const Legend = styled.div`
  width: 48px;
  height: 160px;
  margin-top: 12px;
  margin-left: 3px;
  padding: 8px;
  background: #2c2d28;
  border-radius: 9px;
`;

const LegendInner = styled.div`
  height: 100%;
  display: flex;
  flex-direction: column;
  overflow: hidden;
  border-radius: 5px;
`;

const LegendStep = styled.div<{ $color: string }>`
  flex: 1;
  background: ${(p) => p.$color};
`;

const AskButton = styled.button`
  position: absolute;
  left: 2652px;
  top: 1481px;
  width: 166px;
  height: 64px;
  padding: 0 0 0 22px;
  border: 0;
  border-radius: 32px;
  display: flex;
  align-items: center;
  gap: 13px;
  background: #dfa53c;
  box-shadow: 0 1px 4px rgba(0, 0, 0, 0.12);
  font-family: "Inter", sans-serif;
  font-size: 21.5px;
  font-weight: 600;
  color: #fdf6e3;
`;

export default App;
